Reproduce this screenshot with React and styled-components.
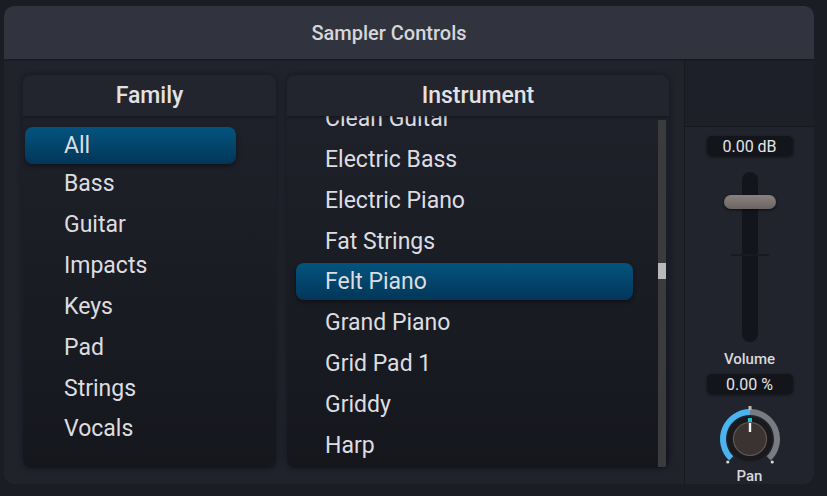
import React from "react";
import styled, { createGlobalStyle } from "styled-components";

const GlobalStyle = createGlobalStyle`
  html, body {
    margin: 0;
    background: #1b1d24;
    font-family: Roboto, "Liberation Sans", sans-serif;
  }
`;

const families = ["All", "Bass", "Guitar", "Impacts", "Keys", "Pad", "Strings", "Vocals"];
const instruments = [
  "Clean Guitar",
  "Electric Bass",
  "Electric Piano",
  "Fat Strings",
  "Felt Piano",
  "Grand Piano",
  "Grid Pad 1",
  "Griddy",
  "Harp",
];

const Frame = styled.div`
  padding: 6px 13px 12px 4px;
`;

const Panel = styled.div`
  width: 810px;
  height: 478px;
  border-radius: 10px;
  background: #20222c;
  overflow: hidden;
  display: flex;
  flex-direction: column;
`;

const Header = styled.div`
  height: 53px;
  flex: none;
  background: #31343f;
  display: flex;
  align-items: center;
  justify-content: center;
  padding-right: 40px;
  color: #d6d6da;
  font-size: 20px;
  font-weight: 500;
  box-shadow: 0 1px 2px rgba(0, 0, 0, 0.35);
  position: relative;
  z-index: 1;
`;

const Body = styled.div`
  flex: 1;
  display: flex;
  min-height: 0;
`;

const Main = styled.div`
  display: flex;
  gap: 11px;
  padding: 16px 15px 16px 19px;
`;

const ListPanel = styled.div`
  width: ${(p) => p.$width}px;
  display: flex;
  flex-direction: column;
  border-radius: 8px;
  overflow: hidden;
  box-shadow: 0 0 6px rgba(0, 0, 0, 0.35);
`;

const ListHeader = styled.div`
  height: 41px;
  flex: none;
  background: #22242e;
  display: flex;
  align-items: center;
  justify-content: center;
  color: #e2e2e4;
  font-size: 23px;
  font-weight: 500;
  box-shadow: 0 1px 3px rgba(0, 0, 0, 0.4);
  position: relative;
  z-index: 1;
`;

const ListBody = styled.div`
  flex: 1;
  display: flex;
  overflow: hidden;
  background: linear-gradient(#1f212a, #15171d);
`;

const Items = styled.div`
  flex: 1;
  display: flex;
  flex-direction: column;
  padding-top: ${(p) => p.$top}px;
  margin-top: ${(p) => p.$shift}px;
`;

const Item = styled.div`
  flex: none;
  position: relative;
  top: ${(p) => (p.$nudge ? 2 : 0)}px;
  height: 37px;
  margin-bottom: 3.85px;
  margin-left: ${(p) => p.$inset}px;
  width: ${(p) => p.$w}px;
  box-sizing: border-box;
  display: flex;
  align-items: center;
  padding-left: ${(p) => p.$indent}px;
  border-radius: 8px;
  font-size: 23px;
  color: #dddde0;
  background: ${(p) =>
    p.$active ? "linear-gradient(#04547f, #023659)" : "transparent"};
  box-shadow: ${(p) => (p.$active ? "0 2px 5px rgba(0,0,0,0.45)" : "none")};
`;

const Scrollbar = styled.div`
  flex: none;
  width: 8px;
  margin: 4px 3px 1px 0;
  background: #3b3b3d;
  position: relative;
`;

const ScrollThumb = styled.div`
  position: absolute;
  left: 0;
  right: 0;
  top: 143px;
  height: 16px;
  background: #b9b9bb;
`;

const Side = styled.div`
  width: 130px;
  border-left: 1px solid #17191f;
  display: flex;
  flex-direction: column;
  align-items: center;
  background: #21232d;
  overflow: hidden;

  & > * {
    flex: none;
  }
`;

const SideTop = styled.div`
  align-self: stretch;
  height: 67px;
  background: #1e2029;
  border-bottom: 1px solid #15171d;
`;

const ValuePill = styled.div`
  width: 86px;
  height: 20px;
  margin-top: ${(p) => p.$top}px;
  border-radius: 5px;
  background: #13151b;
  box-shadow: 0 1px 3px rgba(0, 0, 0, 0.5);
  display: flex;
  align-items: center;
  justify-content: center;
  color: #e4e4e6;
  font-size: 16px;
`;

const Fader = styled.div`
  position: relative;
  width: 52px;
  height: 170px;
  margin-top: 16px;
  display: flex;
  justify-content: center;
`;

const FaderTrack = styled.div`
  width: 16px;
  height: 100%;
  border-radius: 8px;
  background: #12151c;
`;

const FaderTick = styled.div`
  position: absolute;
  top: 82px;
  left: 7px;
  width: 38px;
  height: 2px;
  background: #171a22;
`;

const FaderThumb = styled.div`
  position: absolute;
  top: 23px;
  left: 0;
  width: 52px;
  height: 14px;
  border-radius: 7px;
  background: linear-gradient(#8b8280, #6c6462);
  box-shadow: 0 1px 3px rgba(0, 0, 0, 0.6);
`;

const Label = styled.div`
  margin-top: ${(p) => p.$top}px;
  color: #d8d8dc;
  font-size: 15px;
  font-weight: 500;
  line-height: ${(p) => p.$lh || 18}px;
`;

const KnobSvg = styled.svg`
  display: block;
  margin-top: 11px;
`;

const Knob = () => {
  const cx = 35;
  const cy = 34;
  const r = 27;
  const pt = (deg, rad) => {
    const a = ((deg - 90) * Math.PI) / 180;
    return [cx + rad * Math.cos(a), cy + rad * Math.sin(a)];
  };
  const [sx, sy] = pt(-136, r);
  const [tx, ty] = pt(0, r);
  const [ex, ey] = pt(136, r);
  const [d1x, d1y] = pt(-136, 32);
  const [d2x, d2y] = pt(136, 32);
  return (
    <KnobSvg width="70" height="60" viewBox="0 0 70 60">
      <path
        d={`M${sx} ${sy} A${r} ${r} 0 0 1 ${tx} ${ty}`}
        fill="none"
        stroke="#4ab4ee"
        strokeWidth="6"
      />
      <path
        d={`M${tx} ${ty} A${r} ${r} 0 0 1 ${ex} ${ey}`}
        fill="none"
        stroke="#7a7b80"
        strokeWidth="6"
      />
      <circle cx={d1x} cy={d1y} r="1.6" fill="#d8d8d8" />
      <circle cx={d2x} cy={d2y} r="1.6" fill="#d8d8d8" />
      <rect x={cx - 1.5} y="1" width="3" height="4" fill="#bdbdbd" />
      <circle cx={cx} cy={cy} r="22.5" fill="#1a1a1c" />
      <circle cx={cx} cy={cy} r="16.5" fill="#3a3332" stroke="#615958" strokeWidth="1.2" />
      <rect x={cx - 2} y="13" width="4" height="4" fill="#19c3cf" />
      <rect x={cx - 1.2} y="18" width="2.4" height="9" fill="#f2f2f2" />
    </KnobSvg>
  );
};

export default function App() {
  return (
    <Frame>
      <GlobalStyle />
      <Panel>
        <Header>Sampler Controls</Header>
        <Body>
          <Main>
            <ListPanel $width={253}>
              <ListHeader>Family</ListHeader>
              <ListBody>
                <Items $top={8.5} $shift={0}>
                  {families.map((f, i) => (
                    <Item
                      key={f}
                      $active={i === 0}
                      $nudge={i === 0}
                      $inset={2}
                      $w={211}
                      $indent={39}
                    >
                      {f}
                    </Item>
                  ))}
                </Items>
              </ListBody>
            </ListPanel>
            <ListPanel $width={382}>
              <ListHeader>Instrument</ListHeader>
              <ListBody>
                <Items $top={0} $shift={-16}>
                  {instruments.map((n) => (
                    <Item
                      key={n}
                      $active={n === "Felt Piano"}
                      $inset={9}
                      $w={337}
                      $indent={29}
                    >
                      {n}
                    </Item>
                  ))}
                </Items>
                <Scrollbar>
                  <ScrollThumb />
                </Scrollbar>
              </ListBody>
            </ListPanel>
          </Main>
          <Side>
            <SideTop />
            <ValuePill $top={9}>0.00 dB</ValuePill>
            <Fader>
              <FaderTrack />
              <FaderTick />
              <FaderThumb />
            </Fader>
            <Label $top={8}>Volume</Label>
            <ValuePill $top={6}>0.00 %</ValuePill>
            <Knob />
            <Label $top={4} $lh={15}>
              Pan
            </Label>
          </Side>
        </Body>
      </Panel>
    </Frame>
  );
}
